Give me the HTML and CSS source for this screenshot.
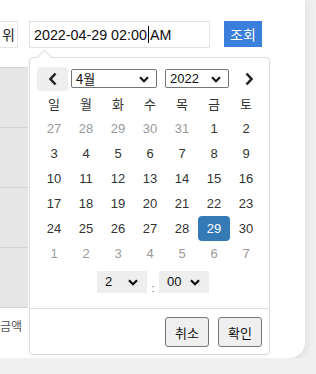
FILE: index.html
```html
<!DOCTYPE html>
<html lang="ko">
<head>
    <meta charset="UTF-8">
    <meta name="viewport" content="width=device-width, initial-scale=1.0">
    <title>조회</title>
    <link rel="stylesheet" href="styles.css">
</head>
<body>
    <div class="card">
        <div class="toolbar">
            <div class="unit-box">위</div>
            <div class="date-input">2022-04-29 02:00<span class="caret"></span>AM</div>
            <button class="search-btn">조회</button>
        </div>

        <div class="table-area">
            <div class="gray-rows">
                <div class="row"></div>
                <div class="row"></div>
                <div class="row"></div>
                <div class="row"></div>
            </div>
            <div class="label">금액</div>
        </div>

        <!-- 달력 팝업 -->
        <div class="picker">
            <div class="picker-arrow"></div>
            <div class="picker-head">
                <button class="nav-btn prev">
                    <svg width="10" height="14" viewBox="0 0 10 14"><path d="M7.5 1.5 L2.5 7 L7.5 12.5" fill="none" stroke="#222" stroke-width="2.6"/></svg>
                </button>
                <div class="sel month-sel">4월<svg class="chev" width="10" height="7" viewBox="0 0 10 7"><path d="M1 1.2 L5 5.2 L9 1.2" fill="none" stroke="#111" stroke-width="2.2"/></svg></div>
                <div class="sel year-sel">2022<svg class="chev" width="10" height="7" viewBox="0 0 10 7"><path d="M1 1.2 L5 5.2 L9 1.2" fill="none" stroke="#111" stroke-width="2.2"/></svg></div>
                <button class="nav-btn next">
                    <svg width="10" height="14" viewBox="0 0 10 14"><path d="M2.5 1.5 L7.5 7 L2.5 12.5" fill="none" stroke="#222" stroke-width="2.6"/></svg>
                </button>
            </div>
            <div class="cal-grid" id="cal"></div>
            <div class="time-row">
                <div class="tsel">2<svg class="chev" width="10" height="7" viewBox="0 0 10 7"><path d="M1 1.2 L5 5.2 L9 1.2" fill="none" stroke="#111" stroke-width="2.2"/></svg></div>
                <span class="colon">:</span>
                <div class="tsel">00<svg class="chev" width="10" height="7" viewBox="0 0 10 7"><path d="M1 1.2 L5 5.2 L9 1.2" fill="none" stroke="#111" stroke-width="2.2"/></svg></div>
            </div>
            <div class="picker-foot">
                <button class="foot-btn">취소</button>
                <button class="foot-btn">확인</button>
            </div>
        </div>
    </div>

    <script>
        const names = ['일', '월', '화', '수', '목', '금', '토'];
        const days = [
            [27, 28, 29, 30, 31, 1, 2],
            [3, 4, 5, 6, 7, 8, 9],
            [10, 11, 12, 13, 14, 15, 16],
            [17, 18, 19, 20, 21, 22, 23],
            [24, 25, 26, 27, 28, 29, 30],
            [1, 2, 3, 4, 5, 6, 7]
        ];
        const cal = document.getElementById('cal');
        let html = '';
        names.forEach(n => { html += `<div class="cell dow">${n}</div>`; });
        days.forEach((week, r) => {
            week.forEach((d, c) => {
                let cls = 'cell';
                if ((r === 0 && c < 5) || r === 5) cls += ' other';
                if (r === 4 && d === 29) cls += ' active';
                html += `<div class="${cls}">${d}</div>`;
            });
        });
        cal.innerHTML = html;
    </script>
</body>
</html>
```

FILE: styles.css
```css
body {
    margin: 0;
    background: #f0f0f0;
    font-family: "Liberation Sans", "Noto Sans CJK KR", sans-serif;
    color: #333;
    overflow: hidden;
}

.card {
    position: relative;
    width: 305px;
    height: 358px;
    background: #fff;
    border-radius: 0 0 16px 0;
    box-shadow: 2px 2px 10px rgba(0, 0, 0, 0.08);
    overflow: hidden;
}

.toolbar {
    display: flex;
    align-items: flex-start;
    padding-top: 21px;
    margin-left: -42px;
    height: 27px;
}

.unit-box {
    width: 56px;
    height: 25px;
    border: 1px solid #e3e3e3;
    font-size: 14px;
    line-height: 25px;
    text-align: right;
    padding-right: 2px;
    color: #222;
    font-family: "Noto Sans CJK KR", sans-serif;
}

.date-input {
    margin-left: 11px;
    width: 175px;
    height: 25px;
    border: 1px solid #e3e3e3;
    padding-left: 4px;
    font-size: 14.3px;
    line-height: 26px;
    color: #111;
    white-space: nowrap;
}

.caret {
    display: inline-block;
    width: 1px;
    height: 17px;
    background: #000;
    vertical-align: -3px;
    margin: 0 1px 0 1px;
}

.search-btn {
    margin-left: 14px;
    width: 38px;
    height: 26px;
    border: none;
    background: #3a7fdb;
    color: #fff;
    font-family: "Noto Sans CJK KR", sans-serif;
    font-size: 14px;
    padding: 0;
}

.table-area {
    margin-top: 19px;
    width: 28px;
}

.gray-rows {
    border-top: 1px solid #d4d4d4;
}

.gray-rows .row {
    height: 59px;
    background: #e6e6e6;
    border-bottom: 1px solid #d4d4d4;
}

.label {
    margin-top: 9px;
    font-size: 12px;
    color: #555;
    font-family: "Noto Sans CJK KR", sans-serif;
    white-space: nowrap;
}

/* 달력 팝업 */
.picker {
    position: absolute;
    left: 29px;
    top: 57px;
    width: 239px;
    height: 296px;
    background: #fff;
    border: 1px solid #dcdcdc;
    border-radius: 4px;
    box-shadow: 0 1px 3px rgba(0, 0, 0, 0.05);
}

.picker-arrow {
    position: absolute;
    top: -6px;
    left: 9px;
    width: 10px;
    height: 10px;
    background: #fff;
    border-top: 1px solid #dcdcdc;
    border-left: 1px solid #dcdcdc;
    transform: rotate(45deg);
}

.picker-head {
    display: flex;
    align-items: center;
    padding: 8px 0 0 7px;
    height: 25px;
}

.nav-btn {
    width: 31px;
    height: 24px;
    border: none;
    border-radius: 3px;
    background: transparent;
    padding: 0;
    display: flex;
    align-items: center;
    justify-content: center;
}

.nav-btn.prev {
    background: #eee;
}

.nav-btn.next {
    margin-left: 4px;
}

.sel {
    position: relative;
    height: 17px;
    border: 1px solid #767676;
    border-radius: 2px;
    font-size: 13px;
    line-height: 17px;
    padding-left: 4px;
    color: #111;
    box-sizing: content-box;
}

.month-sel {
    margin-left: 3px;
    width: 80px;
    font-family: "Noto Sans CJK KR", sans-serif;
}

.year-sel {
    margin-left: 8px;
    width: 58px;
}

.sel .chev {
    position: absolute;
    right: 7px;
    top: 6px;
}

.cal-grid {
    display: grid;
    grid-template-columns: repeat(7, 32px);
    grid-auto-rows: 25px;
    padding-left: 8px;
}

.cell {
    font-size: 13px;
    line-height: 25px;
    text-align: center;
    color: #333;
    border-radius: 4px;
}

.cell.dow {
    font-family: "Noto Sans CJK KR", sans-serif;
    color: #333;
}

.cell.other {
    color: #999;
}

.cell.active {
    background: #337ab7;
    color: #fff;
}

.time-row {
    display: flex;
    align-items: center;
    margin-top: 5px;
    padding-left: 67px;
    height: 22px;
}

.tsel {
    position: relative;
    width: 42px;
    height: 22px;
    background: #eee;
    font-size: 13px;
    line-height: 22px;
    padding-left: 8px;
    color: #111;
}

.tsel .chev {
    position: absolute;
    right: 9px;
    top: 8px;
}

.colon {
    width: 12px;
    text-align: center;
    font-size: 11px;
    color: #666;
    margin-top: 12px;
}

.picker-foot {
    margin-top: 15px;
    border-top: 1px solid #dedede;
    display: flex;
    justify-content: flex-end;
    gap: 9px;
    padding: 8px 7px 0 0;
}

.foot-btn {
    width: 44px;
    height: 30px;
    background: #efefef;
    border: 1px solid #767676;
    border-radius: 3px;
    font-family: "Noto Sans CJK KR", sans-serif;
    font-size: 13px;
    color: #111;
    padding: 0;
}
```
